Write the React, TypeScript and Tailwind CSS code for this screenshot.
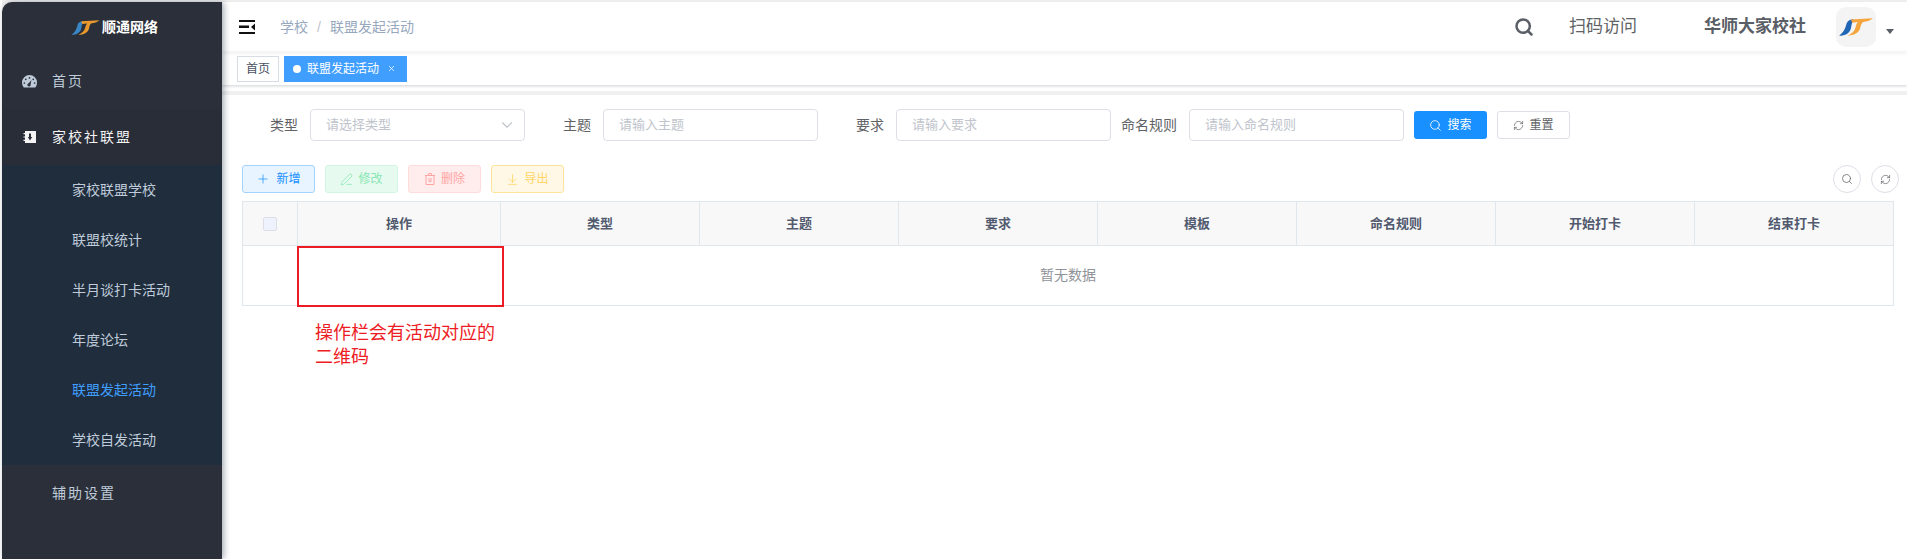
import React from "react";
import { Plus, PenLine, ArrowDownToLine, Search, RefreshCw, ChevronDown, X } from "lucide-react";

const Logo = ({ className, blue, orange }: { className: string; blue: string; orange: string }) => (
  <svg viewBox="0 0 30 16" className={className}>
    <path d="M13 1C8.500 1.400 7 3 6.300 6 5.500 9.800 3.500 13 0 15.800 5.500 15.600 9.500 13.500 10.500 9 11 6.500 11.300 3.500 13 1Z" fill={blue} />
    <path d="M10.500 1.300 30 .3C27.500 2.400 24.500 3.400 21.500 3.500 19.700 4.500 19.300 6.400 18.700 9.200 17.800 13 13 15.800 7.500 15.800 11 14 13.600 12 14.600 8.400 15.200 6.200 15.500 4.800 16.800 3.600L11.500 4.200Z" fill={orange} />
  </svg>
);

const subMenus = ["家校联盟学校", "联盟校统计", "半月谈打卡活动", "年度论坛", "联盟发起活动", "学校自发活动"];
const filters = [
  { label: "类型", placeholder: "请选择类型", select: true },
  { label: "主题", placeholder: "请输入主题" },
  { label: "要求", placeholder: "请输入要求" },
  { label: "命名规则", placeholder: "请输入命名规则" },
];
const columns = ["类型", "主题", "要求", "模板", "命名规则", "开始打卡", "结束打卡"];

const Sidebar = () => (
  <aside className="w-[220px] shrink-0 bg-[#2b2f3a] rounded-tl-[10px] shadow-[2px_0_6px_rgba(0,21,41,0.35)] z-10 text-[14px]">
    <div className="h-[51px] flex items-center justify-center gap-[2px] pl-[5px]">
      <Logo className="w-[29px] h-[15px]" blue="#3a86c4" orange="#e8982c" />
      <span className="text-white font-bold">顺通网络</span>
    </div>
    <div className="h-[56px] flex items-center pl-[20px] text-[#bfcbd9] tracking-[2px]">
      <svg viewBox="0 0 14 12" className="w-[15px] h-[13px] mr-[15px]">
        <path fillRule="evenodd" d="M7 0a7 7 0 0 1 7 7c0 1.800-.6 3.400-1.600 4.600H1.600A7 7 0 0 1 0 7a7 7 0 0 1 7-7Zm0 1.800a.8.8 0 1 0 0 1.600.8.8 0 0 0 0-1.600ZM3.500 3.200a.8.8 0 1 0 0 1.600.8.8 0 0 0 0-1.600Zm7 0a.8.8 0 1 0 0 1.600.8.8 0 0 0 0-1.600ZM2.200 6.600a.8.8 0 1 0 0 1.600.8.8 0 0 0 0-1.600Zm9.600 0a.8.8 0 1 0 0 1.600.8.8 0 0 0 0-1.600ZM8.800 4.600 6.300 7.600a1.500 1.500 0 1 0 1.700 1.200Z" fill="currentColor" />
      </svg>
      <span>首页</span>
    </div>
    <div className="h-[56px] flex items-center pl-[21px] bg-[#292d38] text-[#f4f4f5] tracking-[2px]">
      <svg viewBox="0 0 13 12" className="w-[13px] h-[12px] mr-[16px]">
        <path fillRule="evenodd" d="M2 0h10.500a.5.5 0 0 1 .5.5v11a.5.5 0 0 1-.5.5H2V10H.5V8.800H2V6.600H.5V5.400H2V3.200H.5V2H2Zm4 2.500v3.500H4.800L7 9.500l2.200-3.500H8V2.500Z" fill="currentColor" />
      </svg>
      <span>家校社联盟</span>
    </div>
    <div className="bg-[#1f2d3d]">
      {subMenus.map((name) => (
        <div key={name} className={`h-[50px] flex items-center pl-[70px] ${name === "联盟发起活动" ? "text-[#409eff]" : "text-[#bfcbd9]"}`}>
          {name}
        </div>
      ))}
    </div>
    <div className="h-[56px] flex items-center pl-[50px] text-[#bfcbd9] tracking-[2px]">辅助设置</div>
  </aside>
);

const Header = () => (
  <header className="h-[50px] flex items-center shadow-[0_1px_4px_rgba(0,21,41,0.08)] relative z-[1]">
    <svg viewBox="0 0 16 14" className="w-[16px] h-[14px] ml-[17px] mr-[25px]">
      <path d="M0 0h16v2H0zM0 5.500h10v2.500H0zM0 12h16v2H0zM16 3.500v7L12 7z" fill="#111" />
    </svg>
    <span className="text-[14px] text-[#97a8be]">学校</span>
    <span className="text-[14px] text-[#c0c4cc] mx-[9px]">/</span>
    <span className="text-[14px] text-[#97a8be]">联盟发起活动</span>
    <div className="ml-auto flex items-center text-[#5a5e66]">
      <Search className="w-[20px] h-[20px] mr-[35px]" strokeWidth={3} />
      <span className="text-[17px] text-[#606266] mr-[67px]">扫码访问</span>
      <span className="text-[17px] font-bold mr-[30px]">华师大家校社</span>
      <div className="w-[40px] h-[40px] rounded-[10px] bg-[#f4f4f4] flex items-center justify-center">
        <Logo className="w-[34px] h-[18px]" blue="#1f66b5" orange="#f5a53c" />
      </div>
      <div className="w-0 h-0 ml-[10px] mr-[13px] mt-[9px] border-x-[4px] border-x-transparent border-t-[5px] border-t-[#5a5e66]" />
    </div>
  </header>
);

const TagsBar = () => (
  <div className="h-[33px] flex items-center pl-[15px] gap-[5px] text-[12px] shadow-[0_1px_3px_rgba(0,21,41,0.2)] relative">
    <span className="h-[26px] w-[42px] border border-[#d8dce5] text-[#495060] flex items-center justify-center">首页</span>
    <span className="h-[26px] w-[123px] bg-[#409eff] text-white flex items-center pl-[9px]">
      <span className="w-[8px] h-[8px] rounded-full bg-white mr-[6px]" />
      联盟发起活动
      <X className="w-[9px] h-[9px] ml-[8px]" />
    </span>
  </div>
);

const Filters = () => (
  <form className="flex items-center gap-[10px] pl-[20px] text-[14px]">
    {filters.map((f) => (
      <div key={f.label} className="flex items-center">
        <label className="w-[68px] pr-[12px] text-right text-[#606266] whitespace-nowrap">{f.label}</label>
        <div className="w-[215px] h-[32px] border border-[#dcdfe6] rounded-[4px] flex items-center justify-between pl-[15px] pr-[8px]">
          <span className="text-[13px] text-[#c0c4cc]">{f.placeholder}</span>
          {f.select && <ChevronDown className="w-[18px] h-[18px] text-[#c0c4cc]" strokeWidth={1.5} />}
        </div>
      </div>
    ))}
    <button type="button" className="w-[73px] h-[28px] rounded-[3px] bg-[#1890ff] text-white text-[12px] flex items-center justify-center gap-[5px]">
      <Search className="w-[13px] h-[13px]" strokeWidth={1.5} />
      搜索
    </button>
    <button type="button" className="w-[73px] h-[28px] rounded-[3px] border border-[#dcdfe6] text-[#606266] text-[12px] flex items-center justify-center gap-[5px]">
      <RefreshCw className="w-[11px] h-[11px]" strokeWidth={1.5} />
      重置
    </button>
  </form>
);

const Toolbar = () => (
  <div className="flex items-center gap-[10px] mt-[24px] ml-[20px] text-[12px]">
    <button type="button" className="w-[73px] h-[28px] rounded-[3px] border border-[#a3d3ff] bg-[#e8f4ff] text-[#1890ff] flex items-center justify-center gap-[6px]">
      <Plus className="w-[14px] h-[14px]" strokeWidth={1.25} />
      新增
    </button>
    <button type="button" className="w-[73px] h-[28px] rounded-[3px] border border-[#d0f5e0] bg-[#e7faf0] text-[#89e7b3] flex items-center justify-center gap-[5px]">
      <PenLine className="w-[13px] h-[13px]" strokeWidth={1.5} />
      修改
    </button>
    <button type="button" className="w-[73px] h-[28px] rounded-[3px] border border-[#ffdbdb] bg-[#ffeded] text-[#ffa4a4] flex items-center justify-center gap-[5px]">
      <svg viewBox="0 0 12 12" className="w-[12px] h-[12px]" fill="none" stroke="currentColor">
        <path d="M1 2.500h10M4.500 2.500V.5h3v2M2 2.500v9h8v-9M5 5v3.500h2V5" />
      </svg>
      删除
    </button>
    <button type="button" className="w-[73px] h-[28px] rounded-[3px] border border-[#ffe399] bg-[#fff8e6] text-[#ffd666] flex items-center justify-center gap-[5px]">
      <ArrowDownToLine className="w-[13px] h-[13px]" strokeWidth={1.5} />
      导出
    </button>
    <div className="ml-auto mr-[8px] flex gap-[10px] text-[#606266]">
      <span className="w-[28px] h-[28px] rounded-full border border-[#dcdfe6] flex items-center justify-center">
        <Search className="w-[12px] h-[12px]" strokeWidth={1.5} />
      </span>
      <span className="w-[28px] h-[28px] rounded-full border border-[#dcdfe6] flex items-center justify-center">
        <RefreshCw className="w-[11px] h-[11px]" strokeWidth={1.5} />
      </span>
    </div>
  </div>
);

const DataTable = () => (
  <div className="relative mt-[8px] ml-[20px] w-[1652px] border border-[#dfe6ec] text-[13px]">
    <div className="flex h-[44px] bg-[#f8f8f9] border-b border-[#dfe6ec] text-[#515a6e] font-bold">
      <div className="w-[55px] shrink-0 border-r border-[#dfe6ec] flex items-center justify-center">
        <span className="w-[14px] h-[14px] rounded-[2px] border border-[#dcdfe6] bg-[#edf2fc]" />
      </div>
      <div className="w-[203px] shrink-0 border-r border-[#dfe6ec] flex items-center justify-center">操作</div>
      {columns.map((c) => (
        <div key={c} className="flex-1 border-r border-[#dfe6ec] last:border-r-0 flex items-center justify-center">{c}</div>
      ))}
    </div>
    <div className="h-[59px] flex items-center justify-center text-[14px] text-[#909399]">暂无数据</div>
    {/* annotation over the table */}
    <div className="absolute left-[54px] top-[44px] w-[207px] h-[61px] border-2 border-[#ed1c24]" />
    <div className="absolute left-[72px] top-[119px] w-[185px] text-[18px] leading-[24px] text-[#ed1c24]">操作栏会有活动对应的二维码</div>
  </div>
);

export default function App() {
  return (
    <div className="w-[1907px] h-[559px] overflow-hidden bg-white pl-[2px] flex font-['Liberation_Sans','Noto_Sans_CJK_SC',sans-serif]">
      <div className="flex flex-1 pt-[2px] bg-[#f0f0f0]">
        <Sidebar />
        <main className="flex-1 bg-white min-w-0">
          <Header />
          <TagsBar />
          <div className="h-[6px]" />
          <div className="h-[4px] bg-[#f0f0f0]" />
          <div className="pt-[14px]">
            <Filters />
            <Toolbar />
            <DataTable />
          </div>
        </main>
      </div>
    </div>
  );
}
